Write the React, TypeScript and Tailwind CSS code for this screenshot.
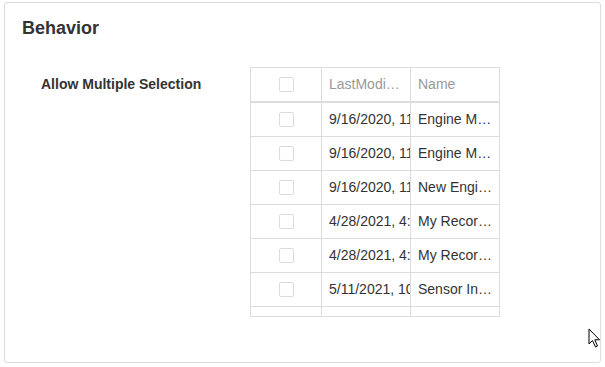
const rows = [
  { date: '9/16/2020, 11:24:13 AM', name: 'Engine Maintenance' },
  { date: '9/16/2020, 11:31:02 AM', name: 'Engine Monitoring' },
  { date: '9/16/2020, 11:45:40 AM', name: 'New Engine Recording' },
  { date: '4/28/2021, 4:12:55 PM', name: 'My Recording' },
  { date: '4/28/2021, 4:20:18 PM', name: 'My Recording 2' },
  { date: '5/11/2021, 10:03:27 AM', name: 'Sensor Insights' },
  { date: '5/12/2021, 9:14:07 AM', name: 'Sensor Insights 2' },
];

function Box() {
  return <div className="w-[15px] h-[15px] border border-[#dcdcdc] rounded-[2px] bg-white" />;
}

function Cursor() {
  return (
    <svg className="absolute left-[588px] top-[328px]" width="14" height="21" viewBox="0 0 14 21">
      <path d="M1 1 L1 16 L4.5 12.5 L7.5 19 L9.5 18 L6.8 11.8 L11.5 11.8 Z" fill="#fff" stroke="#000" strokeWidth="1" strokeLinejoin="miter" />
    </svg>
  );
}

export default function App() {
  return (
    <div className="relative w-[605px] h-[367px] bg-white pt-[2px] pl-[4px]" style={{ fontFamily: '"Liberation Sans", Arial, sans-serif' }}>
      <div className="w-[597px] h-[361px] border border-[#dcdcdc] rounded-[3px] pt-[14px] px-[17px]">
        <h2 className="text-[18px] leading-[22px] font-bold text-[#333]">Behavior</h2>
        <div className="flex mt-[28px]">
          <div className="w-[228px] pl-[19px] h-[34px] flex items-center text-[14px] font-bold text-[#333]">
            Allow Multiple Selection
          </div>
          <div className="w-[250px] border border-[#dcdcdc] text-[14px]">
            <div className="flex h-[35px] border-b-2 border-[#dcdcdc]">
              <div className="w-[71px] border-r border-[#dcdcdc] flex items-center justify-center"><Box /></div>
              <div className="w-[89px] border-r border-[#dcdcdc] px-[7px] flex items-center text-[#999] overflow-hidden">
                <span className="truncate">LastModified</span>
              </div>
              <div className="w-[88px] px-[7px] flex items-center text-[#999]">Name</div>
            </div>
            <div className="h-[213px] overflow-hidden">
              {rows.map((r, i) => (
                <div key={i} className="flex h-[34px] border-b border-[#dcdcdc] text-[#333]">
                  <div className="w-[71px] shrink-0 border-r border-[#dcdcdc] flex items-center justify-center"><Box /></div>
                  <div className="w-[89px] shrink-0 border-r border-[#dcdcdc] pl-[7px] flex items-center overflow-hidden whitespace-nowrap">
                    {r.date}
                  </div>
                  <div className="w-[88px] shrink-0 px-[7px] flex items-center overflow-hidden">
                    <span className="truncate">{r.name}</span>
                  </div>
                </div>
              ))}
            </div>
          </div>
        </div>
      </div>
      <Cursor />
    </div>
  );
}
